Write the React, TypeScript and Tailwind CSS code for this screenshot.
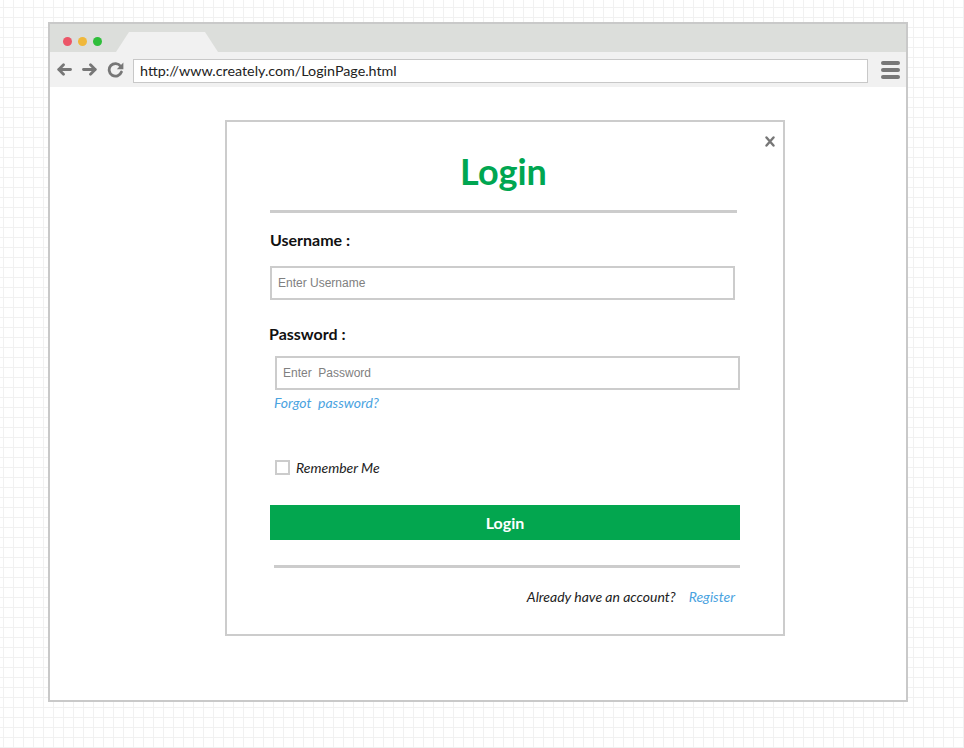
// Creately-style wireframe: a browser window showing a login dialog,
// laid over the light 10px grid of the canvas.

const lato = "font-['Lato','Liberation_Sans',sans-serif]";

function BackArrow({ flip = false }: { flip?: boolean }) {
  return (
    <svg
      viewBox="0 0 15 13"
      className={`h-[13px] w-[15px] ${flip ? "-scale-x-100" : ""}`}
      fill="none"
      stroke="#777777"
      strokeWidth={2.8}
      strokeLinecap="round"
      strokeLinejoin="round"
    >
      <path d="M13.5 6.5H2" />
      <path d="M6.5 1.8L1.8 6.5l4.7 4.7" />
    </svg>
  );
}

function Reload() {
  return (
    <svg viewBox="0 0 17 16" className="h-[16px] w-[17px]" fill="none">
      <path
        d="M13.6 4.2A6.3 6.3 0 1 0 14.4 10"
        stroke="#777777"
        strokeWidth={2.8}
        strokeLinecap="round"
      />
      <path d="M16.4 0.6v6.6H9.8z" fill="#777777" />
    </svg>
  );
}

function Field({ placeholder, offset }: { placeholder: string; offset: string }) {
  return (
    <div
      className={`${offset} flex h-[34px] w-[465px] items-center border-2 border-[#cccccc] bg-white pl-[6px] font-['Liberation_Sans',Arial,sans-serif] text-[12px] whitespace-pre text-[#808080]`}
    >
      {placeholder}
    </div>
  );
}

export default function App() {
  return (
    <div className="min-h-[748px] w-full bg-white bg-[linear-gradient(to_right,#f1f1f1_1px,transparent_1px),linear-gradient(to_bottom,#f1f1f1_1px,transparent_1px)] bg-[size:10px_10px] bg-[position:3px_7px] pt-[22px] pl-[48px]">
      {/* browser window */}
      <div className="flex h-[680px] w-[860px] flex-col border-2 border-[#c9c9c9] bg-white">
        {/* tab strip */}
        <div className="flex h-[28px] bg-[#dcdedb] pl-[13px]">
          <div className="mt-[13px] flex gap-[6px] self-start">
            <span className="h-[9px] w-[9px] rounded-full bg-[#ec5668]" />
            <span className="h-[9px] w-[9px] rounded-full bg-[#f0b83b]" />
            <span className="h-[9px] w-[9px] rounded-full bg-[#2ebe3a]" />
          </div>
          <div className="ml-[14px] h-[20px] w-[102px] self-end bg-[#f1f1f1] [clip-path:polygon(13px_0,89px_0,100%_100%,0_100%)]" />
        </div>

        {/* toolbar */}
        <div className="flex h-[35px] items-center bg-[#f1f1f1] pr-[6px] pl-[7px]">
          <BackArrow />
          <span className="ml-[10px]">
            <BackArrow flip />
          </span>
          <span className="ml-[10px]">
            <Reload />
          </span>
          <div
            className={`${lato} mt-[2px] ml-[9px] flex h-[24px] flex-1 items-center border border-[#c8c8c8] bg-white pl-[6px] text-[14.3px] text-[#222222]`}
          >
            http://www.creately.com/LoginPage.html
          </div>
          <div className="ml-[13px] flex w-[19px] flex-col gap-[3px]">
            <span className="h-[4px] rounded-full bg-[#777777]" />
            <span className="h-[4px] rounded-full bg-[#777777]" />
            <span className="h-[4px] rounded-full bg-[#777777]" />
          </div>
        </div>

        {/* page content */}
        <div className="flex-1 pt-[33px] pl-[175px]">
          <div
            className={`${lato} relative flex h-[516px] w-[560px] flex-col border-2 border-[#cccccc] bg-white`}
          >
            <svg
              viewBox="0 0 10 11"
              className="absolute top-[14px] right-[8px] h-[11px] w-[10px]"
              stroke="#777777"
              strokeWidth={2.4}
              strokeLinecap="round"
            >
              <path d="M1.5 1.5l7 8M8.5 1.5l-7 8" />
            </svg>

            <h1 className="mt-[29px] -ml-[3px] text-center text-[36px] leading-[40px] font-bold text-[#00a651]">
              Login
            </h1>
            <div className="mt-[19px] ml-[43px] h-[3px] w-[467px] bg-[#cccccc]" />

            <label className="mt-[17px] ml-[43px] text-[16px] leading-[20px] font-bold text-[#111111]">
              Username :
            </label>
            <Field placeholder="Enter Username" offset="mt-[16px] ml-[43px]" />

            <label className="mt-[24px] ml-[42px] text-[16px] leading-[20px] font-bold text-[#111111]">
              Password :
            </label>
            <Field placeholder="Enter  Password" offset="mt-[12px] ml-[48px]" />
            <a className="mt-[4px] ml-[47px] text-[14px] leading-[18px] whitespace-pre text-[#4aa3df] italic">
              Forgot  password?
            </a>

            <div className="mt-[48px] ml-[48px] flex h-[15px] items-center gap-[6px]">
              <span className="h-[15px] w-[15px] border-2 border-[#cccccc] bg-white" />
              <span className="text-[14px] leading-[15px] text-[#222222] italic">Remember Me</span>
            </div>

            <button className="mt-[30px] ml-[43px] flex h-[35px] w-[470px] items-center justify-center bg-[#03a64f] text-[16px] font-bold text-white">
              Login
            </button>

            <div className="mt-[25px] ml-[47px] h-[3px] w-[466px] bg-[#cccccc]" />

            <div className="mt-[19px] mr-[48px] flex justify-end gap-[13px] text-[14px] leading-[20px] italic">
              <span className="text-[#222222]">Already have an account?</span>
              <a className="text-[#4aa3df]">Register</a>
            </div>
          </div>
        </div>
      </div>
    </div>
  );
}
